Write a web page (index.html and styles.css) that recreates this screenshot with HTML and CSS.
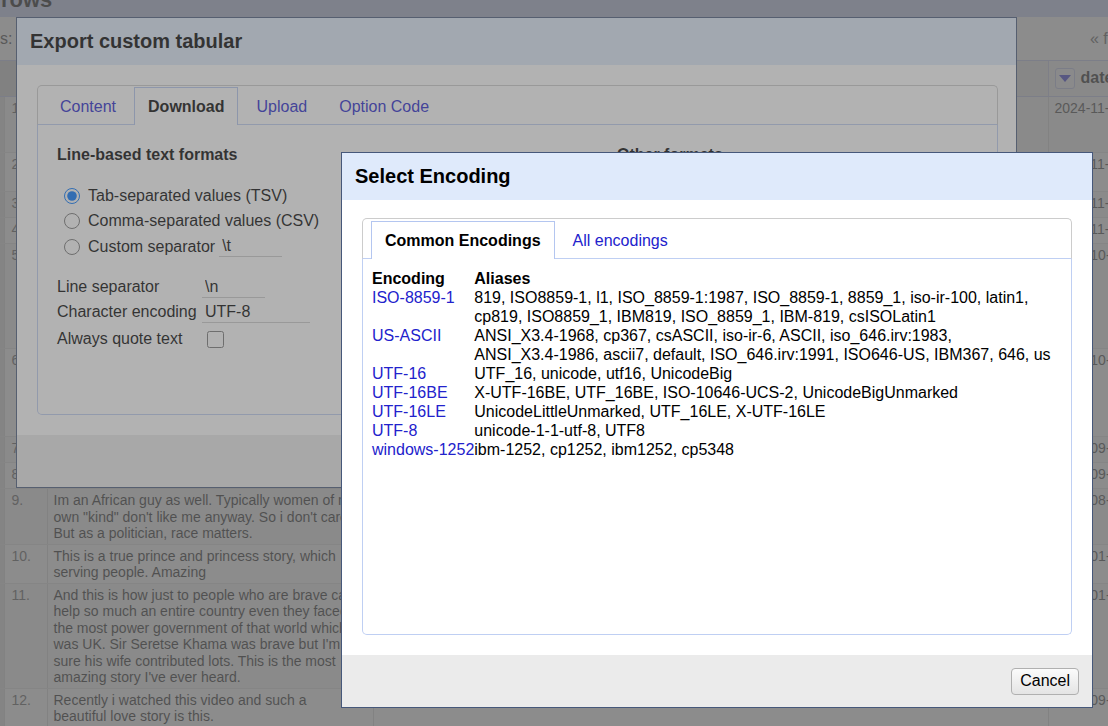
FILE: index.html
```html
<!DOCTYPE html>
<html lang="en">
<head>
<meta charset="utf-8">
<title>Select Encoding</title>
<link rel="stylesheet" href="styles.css">
</head>
<body>
<div class="page">
  <div class="summary"><span class="summary-title">rows</span></div>
  <div class="toolbar">
    <span class="toolbar-label">s:</span>
    <span class="pager">« first ‹ previous</span>
  </div>
  <table class="data-table">
    <colgroup>
      <col class="col-flag"><col class="col-index"><col class="col-comment"><col class="col-author"><col class="col-date">
    </colgroup>
    <thead>
      <tr>
        <th class="head-flag"></th>
        <th class="head-index"></th>
        <th>comment</th>
        <th>author</th>
        <th class="head-date"><span class="column-menu"><svg width="12" height="7" viewBox="0 0 12 7"><path d="M0 0H12L6 7Z" fill="#2a2ad8"/></svg></span><span>date</span></th>
      </tr>
    </thead>
    <tbody>
      <tr class="odd"><td class="cell-flag"><div class="flag-spacer"></div></td><td class="cell-index">1.</td><td class="cell-comment">What a beautiful love story. True love<br>really conquers everything, even the<br>prejudice of a whole empire.</td><td class="cell-author">Tumelo</td><td class="cell-date">2024-11-28</td></tr>
      <tr><td class="cell-flag"><div class="flag-spacer"></div></td><td class="cell-index">2.</td><td class="cell-comment">I had never heard of this couple before.<br>Thank you for telling their story.</td><td class="cell-author">Grace</td><td class="cell-date">2024-11-27</td></tr>
      <tr class="odd"><td class="cell-flag"><div class="flag-spacer"></div></td><td class="cell-index">3.</td><td class="cell-comment">Love wins in the end.</td><td class="cell-author">Kabelo</td><td class="cell-date">2024-11-25</td></tr>
      <tr><td class="cell-flag"><div class="flag-spacer"></div></td><td class="cell-index">4.</td><td class="cell-comment">This should be taught in every school.</td><td class="cell-author">Naledi</td><td class="cell-date">2024-11-20</td></tr>
      <tr class="odd"><td class="cell-flag"><div class="flag-spacer"></div></td><td class="cell-index">5.</td><td class="cell-comment">My grandparents told me about Seretse<br>and Ruth when I was a child. They said<br>the whole village was proud of them.<br>They gave up so much for each other<br>and for their people. Botswana owes<br>them everything.</td><td class="cell-author">Mpho</td><td class="cell-date">2024-10-30</td></tr>
      <tr><td class="cell-flag"><div class="flag-spacer"></div></td><td class="cell-index">6.</td><td class="cell-comment">A king who chose love and still served<br>his nation with dignity. The British<br>government treated them terribly, yet<br>they never gave up on each other or<br>on Botswana.</td><td class="cell-author">Daniel</td><td class="cell-date">2024-10-12</td></tr>
      <tr class="odd"><td class="cell-flag"><div class="flag-spacer"></div></td><td class="cell-index">7.</td><td class="cell-comment">Such an inspiring couple.</td><td class="cell-author">Lerato</td><td class="cell-date">2024-09-28</td></tr>
      <tr><td class="cell-flag"><div class="flag-spacer"></div></td><td class="cell-index">8.</td><td class="cell-comment">Beautiful documentary, thank you.</td><td class="cell-author">Sarah</td><td class="cell-date">2024-09-15</td></tr>
      <tr class="odd"><td class="cell-flag"><div class="flag-spacer"></div></td><td class="cell-index">9.</td><td class="cell-comment">Im an African guy as well. Typically women of my own "kind" don't like me anyway. So i don't care. But as a politician, race matters.</td><td class="cell-author">Kwame</td><td class="cell-date">2024-08-03</td></tr>
      <tr><td class="cell-flag"><div class="flag-spacer"></div></td><td class="cell-index">10.</td><td class="cell-comment">This is a true prince and princess story, which serving people. Amazing</td><td class="cell-author">Thato</td><td class="cell-date">2025-01-05</td></tr>
      <tr class="odd"><td class="cell-flag"><div class="flag-spacer"></div></td><td class="cell-index">11.</td><td class="cell-comment">And this is how just to people who are brave can help so much an entire country even they faced the most power government of that world which was UK. Sir Seretse Khama was brave but I'm sure his wife contributed lots. This is the most amazing story I've ever heard.</td><td class="cell-author">Boitumelo</td><td class="cell-date">2025-01-02</td></tr>
      <tr><td class="cell-flag"><div class="flag-spacer"></div></td><td class="cell-index">12.</td><td class="cell-comment">Recently i watched this video and such a beautiful love story is this.</td><td class="cell-author">Amara</td><td class="cell-date">2024-09-09</td></tr>
    </tbody>
  </table>
</div>

<div class="overlay"></div>

<div class="dialog export-dialog">
  <div class="dialog-header">Export custom tabular</div>
  <div class="dialog-body export-body">
    <div class="tabs">
      <ul class="tabs-nav export-tabs-nav">
        <li class="tab">Content</li>
        <li class="tab tab-active">Download</li>
        <li class="tab">Upload</li>
        <li class="tab">Option Code</li>
      </ul>
      <div class="tabs-panel export-panel">
        <div class="export-column">
          <h3 class="section-title">Line-based text formats</h3>
          <div class="format-list">
            <label class="option-row"><input type="radio" name="format" checked>Tab-separated values (TSV)</label>
            <label class="option-row"><input type="radio" name="format">Comma-separated values (CSV)</label>
            <label class="option-row"><input type="radio" name="format">Custom separator<input class="line-input line-input-short" value="\t"></label>
          </div>
          <div class="settings">
            <div class="settings-row"><span class="settings-label">Line separator</span><input class="line-input line-input-short" value="\n"></div>
            <div class="settings-row"><span class="settings-label">Character encoding</span><input class="line-input line-input-wide" value="UTF-8"></div>
            <div class="settings-row settings-row-check"><span class="settings-label">Always quote text</span><input type="checkbox"></div>
          </div>
        </div>
        <div class="export-column">
          <h3 class="section-title">Other formats</h3>
        </div>
      </div>
    </div>
  </div>
  <div class="dialog-footer"></div>
</div>

<div class="overlay"></div>

<div class="dialog encoding-dialog">
  <div class="dialog-header">Select Encoding</div>
  <div class="dialog-body encoding-body">
    <div class="tabs">
      <ul class="tabs-nav">
        <li class="tab tab-active">Common Encodings</li>
        <li class="tab">All encodings</li>
      </ul>
      <div class="tabs-panel encoding-panel">
        <table class="encodings">
          <tr><th>Encoding</th><th>Aliases</th></tr>
          <tr><td class="encoding-name"><a href="#">ISO-8859-1</a></td><td>819, ISO8859-1, l1, ISO_8859-1:1987, ISO_8859-1, 8859_1, iso-ir-100, latin1, cp819, ISO8859_1, IBM819, ISO_8859_1, IBM-819, csISOLatin1</td></tr>
          <tr><td class="encoding-name"><a href="#">US-ASCII</a></td><td><span class="alias">ANSI_X3.4-1968,</span> cp367, csASCII, iso-ir-6, ASCII, iso_646.irv:1983, <span class="alias">ANSI_X3.4-1986,</span> ascii7, default, ISO_646.irv:1991, ISO646-US, IBM367, 646, us</td></tr>
          <tr><td class="encoding-name"><a href="#">UTF-16</a></td><td>UTF_16, unicode, utf16, UnicodeBig</td></tr>
          <tr><td class="encoding-name"><a href="#">UTF-16BE</a></td><td>X-UTF-16BE, UTF_16BE, ISO-10646-UCS-2, UnicodeBigUnmarked</td></tr>
          <tr><td class="encoding-name"><a href="#">UTF-16LE</a></td><td>UnicodeLittleUnmarked, UTF_16LE, X-UTF-16LE</td></tr>
          <tr><td class="encoding-name"><a href="#">UTF-8</a></td><td>unicode-1-1-utf-8, UTF8</td></tr>
          <tr><td class="encoding-name"><a href="#">windows-1252</a></td><td>ibm-1252, cp1252, ibm1252, cp5348</td></tr>
        </table>
      </div>
    </div>
  </div>
  <div class="dialog-footer">
    <button class="button" type="button">Cancel</button>
  </div>
</div>
</body>
</html>
```

FILE: styles.css
```css
* { box-sizing: border-box; }

html, body { margin: 0; padding: 0; }

body {
  position: relative;
  width: 1108px;
  height: 726px;
  overflow: hidden;
  font-family: "Liberation Sans", Arial, Helvetica, sans-serif;
  font-size: 16px;
  color: #000;
  background: #fff;
}

/* ---------- background page ---------- */
.page { width: 1108px; height: 726px; overflow: hidden; }

.summary { height: 17px; overflow: hidden; background: #c6d2fd; }
.summary-title {
  display: block;
  margin: -13px 0 0 1px;
  font-size: 22px;
  line-height: 25px;
  font-weight: bold;
  white-space: nowrap;
}

.toolbar {
  display: flex;
  align-items: center;
  height: 43px;
  white-space: nowrap;
  color: #333;
}
.toolbar-label { flex: none; width: 1090px; }
.pager { flex: none; color: #555; }

.data-table {
  border-collapse: collapse;
  table-layout: fixed;
  width: 1168px;
  font-size: 14px;
  line-height: 16.5px;
  color: #111;
}
.col-flag { width: 4px; }
.col-index { width: 43px; }
.col-comment { width: 326px; }
.col-author { width: 675px; }
.col-date { width: 120px; }

.data-table th {
  height: 36px;
  padding: 0 6px;
  text-align: left;
  font-size: 16px;
  font-weight: bold;
  background: #ececec;
  border-top: 1px solid #bfc8ef;
  border-bottom: 1px solid #bfc8ef;
  white-space: nowrap;
  overflow: hidden;
}
.data-table th.head-flag,
.data-table th.head-index { background: #d2d2d2; padding: 0; }
.data-table th.head-date { border-left: 1px solid #c6cdec; background: #f2f2f2; }

.column-menu {
  display: inline-flex;
  align-items: center;
  justify-content: center;
  width: 20px;
  height: 21px;
  margin-right: 6px;
  vertical-align: middle;
  border: 1px solid #bcc3ea;
  border-radius: 3px;
  background: #f6f6fa;
}

.data-table td {
  padding: 3px 6px 2px;
  vertical-align: top;
  border-bottom: 1px solid #e4e4e4;
  border-left: 1px solid #d6d6d6;
}
.data-table tr.odd td { background: #f6f6f6; }
.data-table td.cell-flag { padding: 3px 0 2px; border-left: 0; background: #e0e0e0; }
.data-table tr.odd td.cell-flag { background: #e0e0e0; }
.flag-spacer { height: 20px; }
.data-table td.cell-index { padding-left: 7px; color: #555; }
.data-table td.cell-comment { padding-right: 12px; }
.data-table td.cell-author { color: #333; }
.data-table td.cell-date { white-space: nowrap; overflow: hidden; color: #333; }

/* ---------- modal layers ---------- */
.overlay {
  position: absolute;
  inset: 0;
  background: #666;
  opacity: 0.5;
}

.dialog {
  position: absolute;
  display: flex;
  flex-direction: column;
  background: #fff;
  border: 1px solid #46587a;
}
.export-dialog { left: 16px; top: 17px; width: 1001px; height: 471px; }
.encoding-dialog { left: 341px; top: 152px; width: 752px; height: 556px; }

.dialog-header {
  flex: none;
  height: 47px;
  line-height: 47px;
  padding: 0 13px;
  background: #dfeafb;
  font-size: 20px;
  font-weight: bold;
  color: #000;
  white-space: nowrap;
}

.dialog-body {
  flex: 1;
  display: flex;
  flex-direction: column;
  min-height: 0;
}
.export-body { padding: 20px 18px 20px 20px; }
.encoding-body { padding: 18px 20px 20px; }

.dialog-footer {
  flex: none;
  height: 52px;
  display: flex;
  align-items: center;
  justify-content: flex-end;
  padding: 0 13px;
  background: #ebebeb;
}

.button {
  height: 27px;
  padding: 0 8px;
  font-family: inherit;
  font-size: 16px;
  color: #000;
  background: linear-gradient(#fbfbfb, #e4e4e4);
  border: 1px solid #b0b0b0;
  border-radius: 4px;
}

/* ---------- tabs ---------- */
.tabs {
  flex: 1;
  display: flex;
  flex-direction: column;
  min-height: 0;
}
.tabs-nav {
  flex: none;
  display: flex;
  gap: 4px;
  margin: 0;
  padding: 2px 8px 0;
  list-style: none;
  border: 1px solid #cccccc;
  border-bottom-color: #bfcff3;
  border-radius: 5px 5px 0 0;
}
.export-tabs-nav { padding-top: 1px; }
.tab {
  display: flex;
  align-items: center;
  height: 38px;
  margin-bottom: -1px;
  padding: 0 13px;
  border: 1px solid transparent;
  border-bottom: 0;
  color: #2222cc;
  white-space: nowrap;
}
.tab-active {
  background: #fff;
  border-color: #b4c6f0;
  color: #000;
  font-weight: bold;
}
.tabs-panel {
  flex: 1;
  min-height: 0;
  border: 1px solid #bfcff3;
  border-top: 0;
  border-radius: 0 0 5px 5px;
}

/* ---------- export panel ---------- */
.export-panel {
  display: grid;
  grid-template-columns: 560px 1fr;
  align-content: start;
  padding: 20px 19px 18px;
}
.section-title {
  margin: 0;
  font-size: 16px;
  line-height: 19px;
  font-weight: bold;
  white-space: nowrap;
}
.format-list { margin-top: 19px; }
.option-row {
  display: flex;
  align-items: center;
  height: 25.5px;
  white-space: nowrap;
}
.option-row input[type="radio"] {
  flex: none;
  width: 16px;
  height: 16px;
  margin: 0 8px 0 7px;
}
.line-input {
  flex: none;
  height: 21px;
  margin: 0 0 0 4px;
  padding: 0 3px;
  border: 0;
  border-bottom: 1px solid #cccccc;
  background: transparent;
  font-family: inherit;
  font-size: 16px;
  color: #000;
  outline: none;
}
.line-input-short { width: 63px; }
.line-input-wide { width: 108px; }

.settings { margin-top: 15px; }
.settings-row { display: flex; align-items: center; height: 25px; white-space: nowrap; }
.settings-row-check { height: 29px; }
.settings-label { flex: none; width: 145px; }
.settings-row .line-input { margin-left: 0; }
.settings-row input[type="checkbox"] {
  width: 17px;
  height: 17px;
  margin: 0 0 0 5px;
}

/* ---------- encoding panel ---------- */
.encoding-panel { padding: 10px 6px 0 9px; }
.encodings {
  border-collapse: collapse;
  line-height: 19px;
}
.encodings th,
.encodings td {
  padding: 0;
  text-align: left;
  vertical-align: top;
}
.encodings th { font-weight: bold; }
.encoding-name { white-space: nowrap; }
.encoding-name a { color: #2222cc; text-decoration: none; }
.alias { white-space: nowrap; }
```
